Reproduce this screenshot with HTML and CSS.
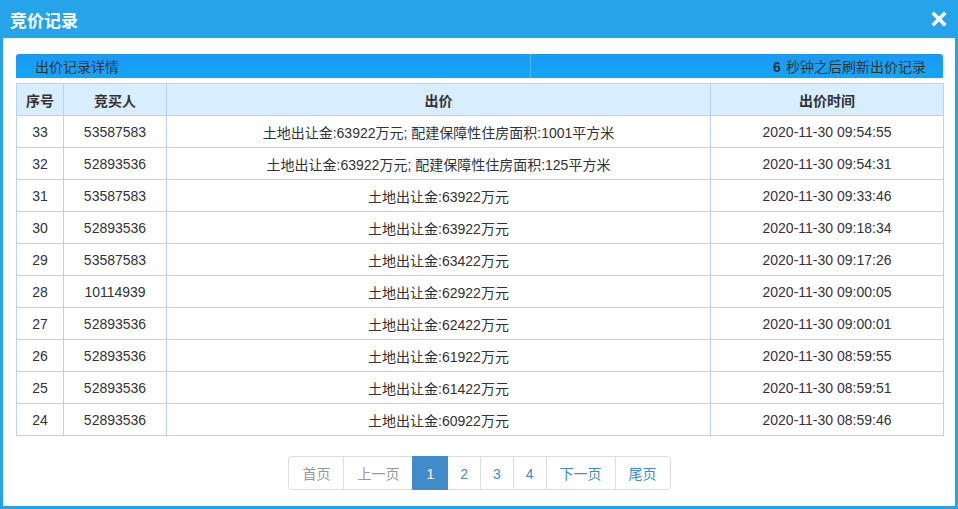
FILE: index.html
```html
<!DOCTYPE html>
<html lang="zh-CN">
<head>
<meta charset="utf-8">
<title>竞价记录</title>
<link rel="stylesheet" href="styles.css">
</head>
<body>
<div class="dialog">
  <div class="titlebar">
    <span class="title">竞价记录</span>
    <span class="close" aria-label="关闭">
      <svg width="16" height="16" viewBox="0 0 16 16"><path d="M3 3 L13 13 M13 3 L3 13" stroke="#fff" stroke-width="3.6" stroke-linecap="square"/></svg>
    </span>
  </div>
  <div class="content">
    <div class="subbar">
      <div class="subbar-left">出价记录详情</div>
      <div class="subbar-right"><b>6</b> 秒钟之后刷新出价记录</div>
    </div>
    <table class="records">
      <colgroup>
        <col class="c1"><col class="c2"><col class="c3"><col class="c4">
      </colgroup>
      <thead>
        <tr><th>序号</th><th>竞买人</th><th>出价</th><th>出价时间</th></tr>
      </thead>
      <tbody>
        <tr><td>33</td><td>53587583</td><td>土地出让金:63922万元; 配建保障性住房面积:1001平方米</td><td>2020-11-30 09:54:55</td></tr>
        <tr><td>32</td><td>52893536</td><td>土地出让金:63922万元; 配建保障性住房面积:125平方米</td><td>2020-11-30 09:54:31</td></tr>
        <tr><td>31</td><td>53587583</td><td>土地出让金:63922万元</td><td>2020-11-30 09:33:46</td></tr>
        <tr><td>30</td><td>52893536</td><td>土地出让金:63922万元</td><td>2020-11-30 09:18:34</td></tr>
        <tr><td>29</td><td>53587583</td><td>土地出让金:63422万元</td><td>2020-11-30 09:17:26</td></tr>
        <tr><td>28</td><td>10114939</td><td>土地出让金:62922万元</td><td>2020-11-30 09:00:05</td></tr>
        <tr><td>27</td><td>52893536</td><td>土地出让金:62422万元</td><td>2020-11-30 09:00:01</td></tr>
        <tr><td>26</td><td>52893536</td><td>土地出让金:61922万元</td><td>2020-11-30 08:59:55</td></tr>
        <tr><td>25</td><td>52893536</td><td>土地出让金:61422万元</td><td>2020-11-30 08:59:51</td></tr>
        <tr><td>24</td><td>52893536</td><td>土地出让金:60922万元</td><td>2020-11-30 08:59:46</td></tr>
      </tbody>
    </table>
    <div class="pager-wrap">
      <ul class="pager">
        <li class="disabled"><span>首页</span></li>
        <li class="disabled"><span>上一页</span></li>
        <li class="active"><span>1</span></li>
        <li class="num"><a href="#">2</a></li>
        <li class="num"><a href="#">3</a></li>
        <li class="num"><a href="#">4</a></li>
        <li><a href="#">下一页</a></li>
        <li><a href="#">尾页</a></li>
      </ul>
    </div>
  </div>
</div>
</body>
</html>
```

FILE: styles.css
```css
* { box-sizing: border-box; }
html, body { margin: 0; padding: 0; background: #fff; }
body {
  font-family: "Liberation Sans", Arial, "Noto Sans CJK SC", sans-serif;
  font-size: 14px;
  color: #333;
}
.dialog {
  width: 958px;
  height: 509px;
  background: #26a4ea;
  padding: 0 3px 3px 3px;
  display: flex;
  flex-direction: column;
}
.titlebar {
  height: 38px;
  flex: none;
  display: flex;
  align-items: center;
  justify-content: space-between;
  padding: 0 8px 0 7px;
}
.title {
  color: #fff;
  font-weight: bold;
  font-size: 17px;
  font-family: "Noto Sans CJK SC", sans-serif;
}
.close { display: flex; width: 16px; height: 16px; }
.content {
  flex: 1;
  background: #fff;
  padding: 16px 12px 0 13px;
}
.subbar {
  height: 24px;
  display: flex;
  align-items: center;
  background: linear-gradient(#1b99f2, #12a6f6);
  border-radius: 3px 3px 0 0;
  margin-bottom: 5px;
  font-family: "Noto Sans CJK SC", sans-serif;
  font-size: 14px;
  color: #333;
}
.subbar-left {
  width: 515px;
  height: 100%;
  display: flex;
  align-items: center;
  padding-left: 19px;
  border-right: 1px solid #4fbaf5;
}
.subbar-right {
  flex: 1;
  text-align: right;
  padding-right: 17px;
}
.subbar-right b { font-family: "Liberation Sans", Arial, sans-serif; margin-right: 2px; }
.records {
  width: 927px;
  border-collapse: collapse;
  table-layout: fixed;
}
.c1 { width: 47px; }
.c2 { width: 103px; }
.c3 { width: 544px; }
.c4 { width: 233px; }
.records th, .records td {
  border: 1px solid #b9d3f1;
  height: 32px;
  padding: 0;
  text-align: center;
  vertical-align: middle;
  white-space: nowrap;
}
.records th {
  background: #d8edfd;
  font-weight: bold;
  font-family: "Noto Sans CJK SC", sans-serif;
  font-size: 14px;
}
.records td { font-size: 14px; }
.pager-wrap {
  display: flex;
  justify-content: center;
  margin-top: 20px;
}
.pager {
  list-style: none;
  margin: 0;
  padding: 0;
  display: flex;
  border-radius: 4px;
}
.pager li span, .pager li a {
  display: block;
  padding: 7px 13px;
  height: 34px;
  line-height: 20px;
  font-size: 14px;
  color: #428bca;
  text-decoration: none;
  border: 1px solid #ddd;
  margin-left: -1px;
  background: #fff;
  font-family: "Liberation Sans", Arial, "Noto Sans CJK SC", sans-serif;
}
.pager li.num a { padding: 7px 12px; }
.pager li:first-child span { margin-left: 0; border-radius: 4px 0 0 4px; }
.pager li:last-child a { border-radius: 0 4px 4px 0; }
.pager li.disabled span { color: #999; }
.pager li.active span {
  background: #428bca;
  border-color: #428bca;
  color: #fff;
  position: relative;
}
```
